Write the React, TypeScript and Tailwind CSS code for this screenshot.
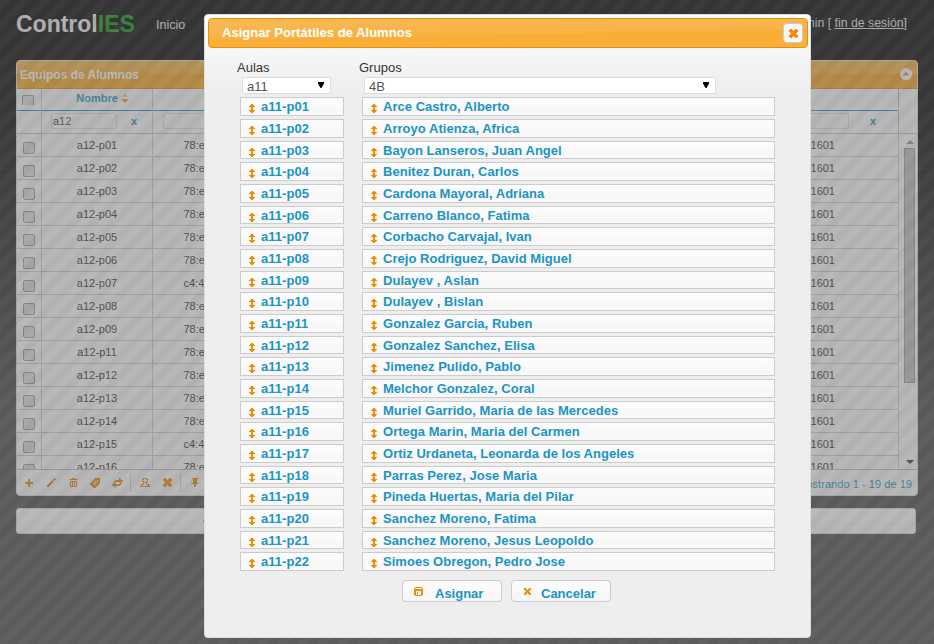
import React from "react";

const orange = "#ef8c08";

const laptops = [
  "a12-p01", "a12-p02", "a12-p03", "a12-p04", "a12-p05", "a12-p06", "a12-p07", "a12-p08",
  "a12-p09", "a12-p11", "a12-p12", "a12-p13", "a12-p14", "a12-p15", "a12-p16",
];

const students = [
  "Arce Castro, Alberto", "Arroyo Atienza, Africa", "Bayon Lanseros, Juan Angel", "Benitez Duran, Carlos",
  "Cardona Mayoral, Adriana", "Carreno Blanco, Fatima", "Corbacho Carvajal, Ivan", "Crejo Rodriguez, David Miguel",
  "Dulayev , Aslan", "Dulayev , Bislan", "Gonzalez Garcia, Ruben", "Gonzalez Sanchez, Elisa",
  "Jimenez Pulido, Pablo", "Melchor Gonzalez, Coral", "Muriel Garrido, Maria de las Mercedes",
  "Ortega Marin, Maria del Carmen", "Ortiz Urdaneta, Leonarda de los Angeles", "Parras Perez, Jose Maria",
  "Pineda Huertas, Maria del Pilar", "Sanchez Moreno, Fatima", "Sanchez Moreno, Jesus Leopoldo",
  "Simoes Obregon, Pedro Jose",
];

const rooms = students.map((_, i) => "a11-p" + String(i + 1).padStart(2, "0"));

/* Bitmap-style glyph: each string is a row, each # a filled pixel. */
function Pix({ rows, className = "" }: { rows: string[]; className?: string }) {
  const w = rows[0].length;
  return (
    <svg width={w} height={rows.length} className={"shrink-0 " + className} shapeRendering="crispEdges" fill={orange}>
      {rows.flatMap((r, y) =>
        r.split("").map((c, x) => (c === "#" ? <rect key={x + "-" + y} x={x} y={y} width="1" height="1" /> : null)),
      )}
    </svg>
  );
}

const I = {
  updown: ["..##..", ".####.", "######", "..##..", "..##..", "..##..", "######", ".####.", "..##.."],
  plus: ["...##...", "...##...", "...##...", "########", "########", "...##...", "...##...", "...##..."],
  pencil: [".......#.", "......###", ".....#.#.", "....##...", "...###...", "..###....", ".###.....", "###......", "##......."],
  trash: ["...###...", "#########", ".........", ".#######.", ".#.#.#.#.", ".#.#.#.#.", ".#.#.#.#.", ".#.#.#.#.", ".#######."],
  tag: [".....#####", "....######", "...####.##", "..###.#.##", ".###.#.###", "###.#.####", "####.####.", ".#######..", "..#####...", "...###...."],
  swap: [".......#...", ".......##..", "...########", "..#########", ".##....##..", "..##....##.", "#########..", "########...", "..##.......", "...#......."],
  person: ["...####...", "..##..##..", "..#....#..", "..##..##..", "...####...", "...#..#...", ".###..###.", "##......##", "##########"],
  close: [".##...##.", "####.####", "#########", ".#######.", "..#####..", ".#######.", "#########", "####.####", ".##...##."],
  pin: [".######.", "..####..", "..####..", "..####..", "..####..", "########", "...##...", "...##...", "...##..."],
  disk: [".#######.", "#.......#", "#########", "#########", "##.....##", "##.#...##", "##.#...##", "##.#...##", ".#######."],
  small: ["##...##", "###.###", ".#####.", "..###..", ".#####.", "###.###", "##...##"],
};

function Check() {
  return <span className="block h-3 w-3 shrink-0 rounded-[2px] border border-[#9a9a9a] bg-[#dedede]" />;
}

function GridPage() {
  return (
    <div className="flex h-[644px] flex-col bg-[linear-gradient(#000000_0px,#080808_110px,#4a4a4a_410px,#4e4e4e_644px)]">
      <header className="flex h-[60px] shrink-0 items-start pl-4 pr-[27px]">
        <div className="mt-[10px] w-[118px] text-[23px] leading-[28px] font-bold text-[#f0f0f0]">
          Control<span className="text-[#109010]">IES</span>
        </div>
        <span className="mt-4 ml-[22px] text-[12.5px] leading-[18px] text-[#e8e8e8]">Inicio</span>
        <span className="mt-[15px] ml-auto text-[12.3px] leading-4 text-[#e0e0e0]">
          admin [ <span className="underline">fin de sesión</span>]
        </span>
      </header>

      <section className="ml-4 flex h-[436px] w-[902px] shrink-0 flex-col overflow-hidden rounded-[4px] border border-[#ddd] bg-[#fcfcfc]">
        <div className="flex h-[27px] shrink-0 items-center justify-between bg-[linear-gradient(#f8b34a_0%,#f7ae38_49%,#f6a21a_50%,#f6a828_100%)] pr-[3px] pl-[3px]">
          <span className="text-[12px] leading-4 font-bold text-white">Equipos de Alumnos</span>
          <span className="flex h-3 w-4 items-center justify-center">
            <svg width="14" height="14" className="mt-[-2px] shrink-0">
              <circle cx="7" cy="7" r="6" fill="#fff" />
              <path d="M3.500 8.500 7 5l3.500 3.500z" fill={orange} />
            </svg>
          </span>
        </div>
        <div className="flex h-[46px] shrink-0 border-t border-[#e78f08] border-b border-b-[#c4c4c4]">
          <div className="flex w-[25px] flex-col border-r border-[#ccc]">
            <div className="h-[22px] border-b border-[#1c94c4] pt-[6px] pl-[5px]">
              <span className="block h-[10px] w-3 rounded-t-[2px] border border-b-0 border-[#9a9a9a] bg-[#dedede]" />
            </div>
          </div>
          <div className="flex w-[111px] flex-col border-r border-[#ccc]">
            <div className="flex h-[22px] items-center justify-center gap-[3px] border-b border-[#1c94c4] pb-[2px] pl-[11px] text-[11px] font-bold text-[#1c94c4]">
              <span>Nombre</span>
              <svg width="8" height="10" className="mt-[-2px]"><path d="M0 4 4 0l4 4z" fill="#f7d0a0" /><path d="M0 6h8l-4 4z" fill={orange} /></svg>
            </div>
            <div className="flex items-center pt-[2px] pl-[9px]">
              <span className="flex h-4 w-[66px] items-center rounded-[2px] border border-[#ddd] pl-px text-[11px] text-[#444]">a12</span>
              <b className="ml-[14px] text-[11px] leading-4 text-[#1c94c4]">x</b>
            </div>
          </div>
          <div className="flex w-[746px] flex-col border-r border-[#bbb]">
            <div className="h-[22px] border-b border-[#1c94c4]" />
            <div className="flex items-center pt-[2px] pl-[10px]">
              <span className="h-4 w-[66px] rounded-[2px] border border-[#ddd]" />
              <span className="ml-auto h-4 w-[66px] rounded-[2px] border border-[#ddd]" />
              <b className="mr-[22px] ml-[21px] text-[11px] leading-4 text-[#1c94c4]">x</b>
            </div>
          </div>
        </div>
        <div className="flex h-[335px] shrink-0 overflow-hidden">
          <div className="w-[882px] border-r border-[#ccc]">
            {laptops.map((n, i) => (
              <div key={n} className="flex h-[23px] border-b border-[#ccc] text-[11px] leading-[22px] text-[#333]">
                <span className="w-[25px] border-r border-[#ccc] pt-2 pl-[6px]"><Check /></span>
                <span className="w-[111px] border-r border-[#ccc] text-center">{n}</span>
                <span className="pl-[30.500px]">{i === 6 || i === 13 ? "c4:4" : "78:e"}</span>
                <span className="ml-auto pr-[63px]">1601</span>
              </div>
            ))}
          </div>
          <div className="flex flex-1 flex-col items-center pt-[6px] pb-[5px]">
            <svg width="8" height="4" className="mr-[-3px]"><path d="M0 4 4 0l4 4z" fill="#999" /></svg>
            <div className="mt-1 mr-[-3px] h-[235px] w-[11px] border border-[#a0a0a0] bg-[#c0c0c0]" />
            <svg width="8" height="4" className="mt-auto mr-[-3px]"><path d="M0 0h8L4 4z" fill="#333" /></svg>
          </div>
        </div>
        <div className="flex flex-1 items-center border-t border-[#bbb] pr-[5px] pl-2 text-[11px] text-[#1c94c4]">
          <span className="flex w-[22px]"><Pix rows={I.plus} /></span>
          <span className="flex w-[22px]"><Pix rows={I.pencil} /></span>
          <span className="flex w-[21px]"><Pix rows={I.trash} /></span>
          <span className="flex w-[22px]"><Pix rows={I.tag} /></span>
          <span className="flex w-[18px]"><Pix rows={I.swap} /></span>
          <span className="mr-[9px] h-[18px] w-px bg-[#d4d4d4]" />
          <span className="flex w-[23px]"><Pix rows={I.person} /></span>
          <span className="flex w-[17px]"><Pix rows={I.close} /></span>
          <span className="mr-[10px] h-[18px] w-px bg-[#d4d4d4]" />
          <Pix rows={I.pin} />
          <span className="ml-auto pt-[3px] tracking-[0.05px]">Mostrando 1 - 19 de 19</span>
        </div>
      </section>

      <footer className="mt-3 ml-4 flex h-[26px] w-[900px] shrink-0 items-center rounded-[3px] border border-[#ddd] bg-[linear-gradient(#ffffff_50%,#f9f9f9_50%)] pl-[186px] text-[11px] text-[#444]">
        ©
      </footer>
    </div>
  );
}

function ListItem({ label }: { label: string }) {
  return (
    <li className="mb-[3px] flex h-[19px] items-start border border-[#ccc] bg-[linear-gradient(#fbfbfb_0%,#fafafa_50%,#f7f7f7_50%,#f9f9f9_100%)] pl-2 text-[13px] leading-[17px] font-bold tracking-[0.03px] text-[#1c94c4] nth-[3n]:h-[18px]">
      <Pix rows={I.updown} className="mt-[6px] mr-[6px]" />
      <span className="whitespace-nowrap">{label}</span>
    </li>
  );
}

function Select({ value, className }: { value: string; className: string }) {
  return (
    <div className={"flex h-[17px] items-start justify-between overflow-hidden rounded-[2px] border border-[#ddd] bg-white pr-[6px] pl-1 text-[13px] leading-4 text-[#555] " + className}>
      <span className="pt-px">{value}</span>
      <svg width="6" height="7" className="mt-1"><path d="M0 0h6v1.500L3.500 6h-1L0 1.500z" fill="#000" /></svg>
    </div>
  );
}

function Dialog() {
  return (
    <div role="dialog" className="absolute top-[14px] left-[204px] flex h-[624px] w-[607px] flex-col rounded-[4px] border border-[#ddd] bg-[#eee] bg-[linear-gradient(#ffffff_0px,#eeeeee_75px)] p-[3px]">
      <div className="flex h-[30px] w-[600px] shrink-0 items-center justify-between rounded-[4px] border border-[#e78f08] bg-[linear-gradient(179deg,#f9b953_0%,#f8b347_50%,#f9ad35_58%,#f9b03c_100%)] pr-1 pl-[13px]">
        <h1 className="text-[13px] leading-4 font-bold tracking-[0.04px] text-white">Asignar Portátiles de Alumnos</h1>
        <span className="flex h-5 w-5 items-center justify-center rounded-[4px] border border-[#ccc] bg-[#f8f8f8]">
          <Pix rows={I.close} />
        </span>
      </div>
      <div className="flex pt-3 pl-[29px] text-[13px] leading-4 text-[#333]">
        <div className="w-[122px]">
          Aulas
          <Select value="a11" className="mt-px ml-[5px] w-[89px]" />
        </div>
        <div>
          Grupos
          <Select value="4B" className="mt-px ml-[5px] w-[352px]" />
        </div>
      </div>
      <div className="mt-[3px] flex pl-8">
        <ul className="w-[104px]">{rooms.map((r) => <ListItem key={r} label={r} />)}</ul>
        <ul className="ml-[18px] w-[413px]">{students.map((s) => <ListItem key={s} label={s} />)}</ul>
      </div>
      <div className="mt-[6px] flex gap-[9px] pl-[194px] text-[13px] leading-4 font-bold text-[#1c94c4]">
        <button className="flex h-[22px] w-[100px] items-center rounded-[4px] border border-[#ccc] bg-[linear-gradient(#fbfbfb_50%,#f7f7f7_50%)] pl-[11px]">
          <Pix rows={I.disk} className="mr-3" />
          <span className="pt-[6px]">Asignar</span>
        </button>
        <button className="flex h-[22px] w-[100px] items-center rounded-[4px] border border-[#ccc] bg-[linear-gradient(#fbfbfb_50%,#f7f7f7_50%)] pl-3">
          <Pix rows={I.small} className="mr-[10px]" />
          <span className="pt-[6px]">Cancelar</span>
        </button>
      </div>
    </div>
  );
}

export default function App() {
  return (
    <div className="relative h-[644px] w-[934px] overflow-hidden font-['Liberation_Sans',Arial,sans-serif]">
      <GridPage />
      <div className="absolute inset-0 bg-[repeating-linear-gradient(135deg,#686868_0px,#747474_1px,#747474_7.4px,#686868_8.1px,#686868_14.142px)] opacity-50" />
      <Dialog />
    </div>
  );
}
